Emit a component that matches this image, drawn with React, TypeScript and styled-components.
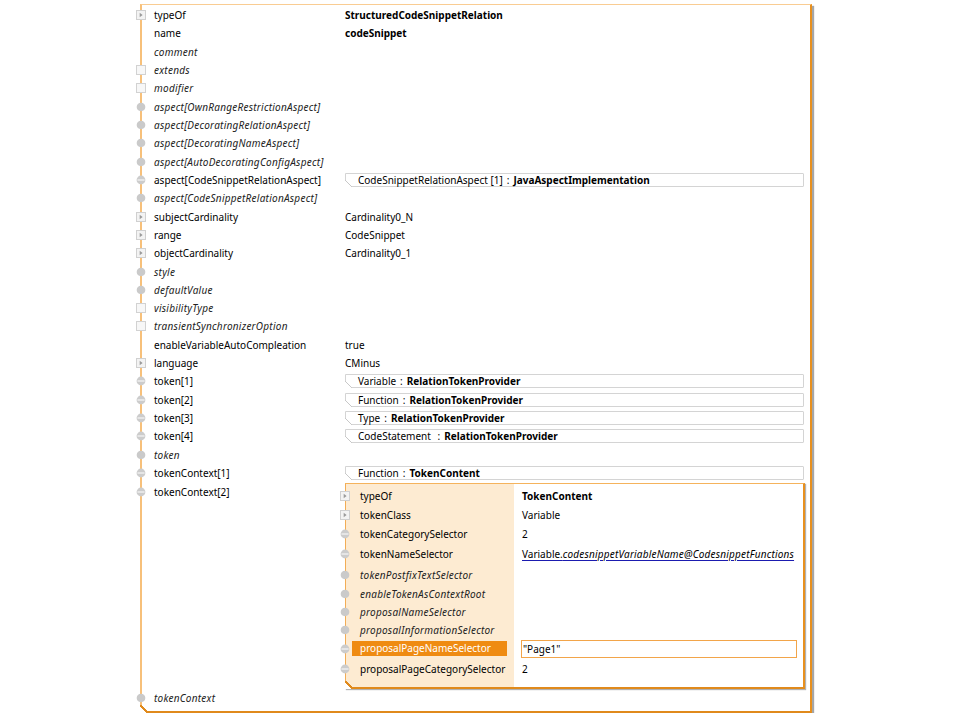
import React from 'react';
import styled, { createGlobalStyle } from 'styled-components';

const GlobalStyle = createGlobalStyle`
  html, body {
    margin: 0;
    background: #ffffff;
  }
  body {
    font-family: 'Noto Sans', 'Open Sans', sans-serif;
    font-size: 10px;
    color: #000000;
  }
`;

type IconKind = 'expand' | 'square' | 'dot' | 'minus' | 'none';

type Value =
  | { kind: 'text'; text: string }
  | { kind: 'bold'; text: string }
  | { kind: 'ref'; name: string; type: string }
  | { kind: 'link'; head: string; tail: string }
  | { kind: 'input'; text: string }
  | { kind: 'panel' };

interface RowData {
  label: string;
  icon: IconKind;
  italic?: boolean;
  selected?: boolean;
  value?: Value;
  height?: number;
}

const outerRows: RowData[] = [
  { label: 'typeOf', icon: 'expand', value: { kind: 'bold', text: 'StructuredCodeSnippetRelation' } },
  { label: 'name', icon: 'none', value: { kind: 'bold', text: 'codeSnippet' } },
  { label: 'comment', icon: 'none', italic: true },
  { label: 'extends', icon: 'square', italic: true },
  { label: 'modifier', icon: 'square', italic: true },
  { label: 'aspect[OwnRangeRestrictionAspect]', icon: 'dot', italic: true },
  { label: 'aspect[DecoratingRelationAspect]', icon: 'dot', italic: true },
  { label: 'aspect[DecoratingNameAspect]', icon: 'dot', italic: true },
  { label: 'aspect[AutoDecoratingConfigAspect]', icon: 'dot', italic: true },
  {
    label: 'aspect[CodeSnippetRelationAspect]',
    icon: 'minus',
    value: { kind: 'ref', name: 'CodeSnippetRelationAspect [1]', type: 'JavaAspectImplementation' },
  },
  { label: 'aspect[CodeSnippetRelationAspect]', icon: 'dot', italic: true },
  { label: 'subjectCardinality', icon: 'expand', value: { kind: 'text', text: 'Cardinality0_N' } },
  { label: 'range', icon: 'expand', value: { kind: 'text', text: 'CodeSnippet' } },
  { label: 'objectCardinality', icon: 'expand', value: { kind: 'text', text: 'Cardinality0_1' } },
  { label: 'style', icon: 'dot', italic: true },
  { label: 'defaultValue', icon: 'dot', italic: true },
  { label: 'visibilityType', icon: 'square', italic: true },
  { label: 'transientSynchronizerOption', icon: 'square', italic: true },
  { label: 'enableVariableAutoCompleation', icon: 'none', value: { kind: 'text', text: 'true' } },
  { label: 'language', icon: 'expand', value: { kind: 'text', text: 'CMinus' } },
  { label: 'token[1]', icon: 'minus', value: { kind: 'ref', name: 'Variable', type: 'RelationTokenProvider' } },
  { label: 'token[2]', icon: 'minus', value: { kind: 'ref', name: 'Function', type: 'RelationTokenProvider' } },
  { label: 'token[3]', icon: 'minus', value: { kind: 'ref', name: 'Type', type: 'RelationTokenProvider' } },
  { label: 'token[4]', icon: 'minus', value: { kind: 'ref', name: 'CodeStatement ', type: 'RelationTokenProvider' } },
  { label: 'token', icon: 'dot', italic: true },
  { label: 'tokenContext[1]', icon: 'minus', value: { kind: 'ref', name: 'Function', type: 'TokenContent' } },
  { label: 'tokenContext[2]', icon: 'minus', value: { kind: 'panel' } },
  { label: 'tokenContext', icon: 'dot', italic: true },
];

const innerRows: RowData[] = [
  { label: 'typeOf', icon: 'expand', height: 18, value: { kind: 'bold', text: 'TokenContent' } },
  { label: 'tokenClass', icon: 'expand', height: 19, value: { kind: 'text', text: 'Variable' } },
  { label: 'tokenCategorySelector', icon: 'minus', height: 19, value: { kind: 'text', text: '2' } },
  {
    label: 'tokenNameSelector',
    icon: 'minus',
    height: 21,
    value: { kind: 'link', head: 'Variable.', tail: 'codesnippetVariableName@CodesnippetFunctions' },
  },
  { label: 'tokenPostfixTextSelector', icon: 'dot', italic: true, height: 21 },
  { label: 'enableTokenAsContextRoot', icon: 'dot', italic: true, height: 18 },
  { label: 'proposalNameSelector', icon: 'dot', italic: true, height: 18 },
  { label: 'proposalInformationSelector', icon: 'dot', italic: true, height: 18 },
  {
    label: 'proposalPageNameSelector',
    icon: 'minus',
    selected: true,
    height: 19,
    value: { kind: 'input', text: '"Page1"' },
  },
  { label: 'proposalPageCategorySelector', icon: 'minus', height: 21, value: { kind: 'text', text: '2' } },
];

const Page = styled.div`
  padding: 4px 0 0 140px;
`;

const Panel = styled.div`
  position: relative;
  box-sizing: border-box;
  width: 672px;
  padding: 1px 0 4px;
  background: #ffffff;
  border-top: 1px solid #f9cc92;
  border-left: 2px solid #f7c07a;
  border-right: 2px solid #e8901e;
  border-bottom: 2px solid #e08a1c;
  box-shadow: 2px 2px 1px rgba(0, 0, 0, 0.35);

  &::after {
    content: '';
    position: absolute;
    left: -2px;
    bottom: -2px;
    width: 8px;
    height: 8px;
    background: linear-gradient(
      to top right,
      #ffffff calc(50% - 1px),
      #e08a1c calc(50% - 1px),
      #e08a1c calc(50% + 1px),
      transparent calc(50% + 1px)
    );
  }
`;

const InnerPanel = styled(Panel)`
  width: 460px;
  margin: 1px 0 0;
  padding: 3px 0 8px;
  border-top: 1px solid #f5b35c;
  border-left: 1px solid #f2ad56;
  border-right: 2px solid #e8901e;
  background: linear-gradient(to right, #fdebd2 168px, #ffffff 168px);
  box-shadow: 1px 1px 1px rgba(0, 0, 0, 0.3);

  &::after {
    left: -1px;
  }
`;

const Row = styled.div<{ $h: number; $cols: string }>`
  position: relative;
  display: grid;
  grid-template-columns: ${(p) => p.$cols};
  align-items: center;
  min-height: ${(p) => p.$h}px;
`;

const TallRow = styled(Row)`
  align-items: start;
`;

const Label = styled.span<{ $italic?: boolean; $pad: number; $lh?: number }>`
  padding-left: ${(p) => p.$pad}px;
  padding-top: ${(p) => (p.$lh ? 1 : 0)}px;
  line-height: ${(p) => (p.$lh ? `${p.$lh}px` : 'normal')};
  font-style: ${(p) => (p.$italic ? 'italic' : 'normal')};
  letter-spacing: ${(p) => (p.$italic ? '0.25px' : '0')};
  color: ${(p) => (p.$italic ? '#222222' : '#000000')};
  white-space: nowrap;
`;

const Selected = styled.span`
  display: inline-block;
  box-sizing: border-box;
  width: 155px;
  margin-left: -8px;
  padding: 0 8px;
  line-height: 15px;
  background: #ef8b12;
  color: #ffffff;
`;

const ValueCell = styled.div<{ $pad: number }>`
  padding-left: ${(p) => p.$pad}px;
  white-space: nowrap;
`;

const Bold = styled.span`
  font-weight: 700;
`;

const RefBox = styled.div`
  position: relative;
  box-sizing: border-box;
  width: 459px;
  height: 14px;
  padding-left: 12px;
  line-height: 12px;
  border: 1px solid #d4d4d4;
  border-radius: 0 1px 1px 0;

  &::before {
    content: '';
    position: absolute;
    left: -1px;
    bottom: -1px;
    width: 7px;
    height: 7px;
    background: linear-gradient(
      to top right,
      #ffffff calc(50% - 0.5px),
      #c8c8c8 calc(50% - 0.5px),
      #c8c8c8 calc(50% + 0.5px),
      transparent calc(50% + 0.5px)
    );
  }
`;

const Sep = styled.span`
  padding: 0 4px;
`;

const Link = styled.span`
  text-decoration: underline;
  text-decoration-color: #1b1bb0;
  text-underline-offset: 2px;

  i {
    letter-spacing: 0.2px;
  }
`;

const Input = styled.div`
  box-sizing: border-box;
  width: 276px;
  height: 18px;
  margin-left: -1px;
  padding-left: 1px;
  line-height: 16px;
  border: 1px solid #f2a54a;
`;

const IconSlot = styled.span<{ $left: number }>`
  position: absolute;
  left: ${(p) => p.$left}px;
  top: 50%;
  width: 10px;
  height: 10px;
  margin-top: -5px;
  display: flex;
`;

const TopIconSlot = styled(IconSlot)<{ $top: number }>`
  top: ${(p) => p.$top}px;
  margin-top: 0;
`;

function Icon({ kind }: { kind: IconKind }) {
  if (kind === 'none') return null;
  if (kind === 'expand') {
    return (
      <svg width='10' height='10' viewBox='0 0 10 10'>
        <rect x='0.5' y='0.5' width='9' height='9' fill='#f3f3f3' stroke='#d0d0d0' />
        <path d='M3.7 2.8 L6.6 5 L3.7 7.2 Z' fill='#9a9a9a' />
      </svg>
    );
  }
  if (kind === 'square') {
    return (
      <svg width='10' height='10' viewBox='0 0 10 10'>
        <rect x='0.5' y='0.5' width='9' height='9' fill='#f7f7f7' stroke='#d2d2d2' />
      </svg>
    );
  }
  if (kind === 'dot') {
    return (
      <svg width='10' height='10' viewBox='0 0 10 10'>
        <path d='M5 0.8 C7.6 0.8 9.3 2.7 9.3 5 C9.3 7.3 7.6 9.2 5 9.2 C2.4 9.2 0.7 7.3 0.7 5 C0.7 2.7 2.4 0.8 5 0.8 Z' fill='#cacaca' />
      </svg>
    );
  }
  return (
    <svg width='10' height='10' viewBox='0 0 10 10'>
      <circle cx='5' cy='5' r='4.4' fill='#cccccc' />
      <rect x='1.5' y='4.3' width='7' height='1.4' fill='#efefef' />
    </svg>
  );
}

function ValueView({ value }: { value?: Value }) {
  if (!value) return null;
  switch (value.kind) {
    case 'text':
      return <span>{value.text}</span>;
    case 'bold':
      return <Bold>{value.text}</Bold>;
    case 'ref':
      return (
        <RefBox>
          {value.name}
          <Sep>:</Sep>
          <Bold>{value.type}</Bold>
        </RefBox>
      );
    case 'link':
      return (
        <Link>
          {value.head}
          <i>{value.tail}</i>
        </Link>
      );
    case 'input':
      return <Input>{value.text}</Input>;
    case 'panel':
      return <TokenContentPanel />;
  }
}

function TokenContentPanel() {
  return (
    <InnerPanel>
      {innerRows.map((r, i) => (
        <Row key={i} $h={r.height ?? 18} $cols='168px 1fr'>
          <IconSlot $left={-6}>
            <Icon kind={r.icon} />
          </IconSlot>
          <Label $italic={r.italic} $pad={14}>
            {r.selected ? <Selected>{r.label}</Selected> : r.label}
          </Label>
          <ValueCell $pad={8}>
            <ValueView value={r.value} />
          </ValueCell>
        </Row>
      ))}
    </InnerPanel>
  );
}

const ROW_H = 18.32;

export default function App() {
  return (
    <>
      <GlobalStyle />
      <Page>
        <Panel>
          {outerRows.map((r, i) =>
            r.value?.kind === 'panel' ? (
              <TallRow key={i} $h={ROW_H} $cols='203px 1fr'>
                <TopIconSlot $left={-6} $top={5}>
                  <Icon kind={r.icon} />
                </TopIconSlot>
                <Label $italic={r.italic} $pad={12} $lh={ROW_H}>
                  {r.label}
                </Label>
                <ValueCell $pad={0}>
                  <ValueView value={r.value} />
                </ValueCell>
              </TallRow>
            ) : (
              <Row key={i} $h={ROW_H} $cols='203px 1fr'>
                <IconSlot $left={-6}>
                  <Icon kind={r.icon} />
                </IconSlot>
                <Label $italic={r.italic} $pad={12}>
                  {r.label}
                </Label>
                <ValueCell $pad={0}>
                  <ValueView value={r.value} />
                </ValueCell>
              </Row>
            ),
          )}
        </Panel>
      </Page>
    </>
  );
}
